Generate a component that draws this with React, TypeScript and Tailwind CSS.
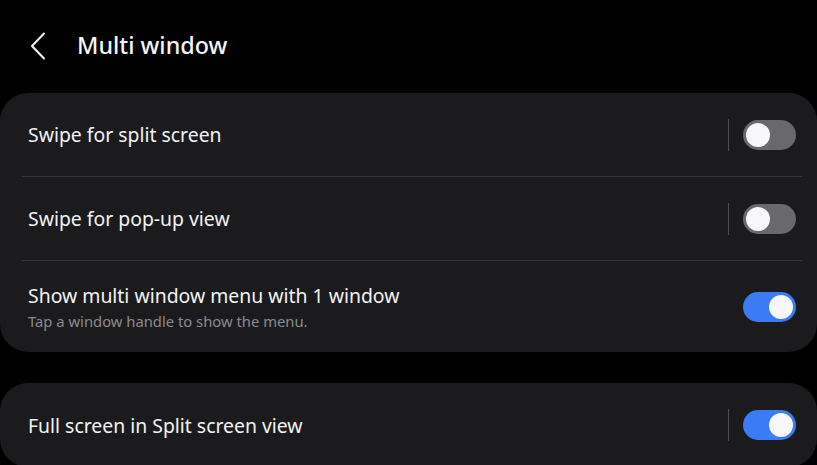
import React from 'react';

type Row = { title: string; sub?: string; on: boolean; divider: boolean };

const group1: Row[] = [
  { title: 'Swipe for split screen', on: false, divider: true },
  { title: 'Swipe for pop-up view', on: false, divider: true },
  { title: 'Show multi window menu with 1 window', sub: 'Tap a window handle to show the menu.', on: true, divider: false },
];

const group2: Row[] = [{ title: 'Full screen in Split screen view', on: true, divider: true }];

const Toggle: React.FC<{ on: boolean }> = ({ on }) => (
  <div
    className={`w-[53px] h-[30px] rounded-full flex items-center px-[3px] ${
      on ? 'bg-[#3b7cf5] justify-end' : 'bg-[#68686d] justify-start'
    }`}
  >
    <div className="w-[24px] h-[24px] rounded-full bg-[#f8f8fc]" />
  </div>
);

const SettingRow: React.FC<{ row: Row; last: boolean }> = ({ row, last }) => (
  <div className="pl-[22px] pr-[15px]">
    <div className={`flex items-center px-[6px] ${row.sub ? 'h-[91px]' : 'h-[84px]'} ${last ? '' : 'border-b border-[#38383a]'}`}>
      <div className="flex-1 mt-[1px]">
        <div className="text-[19.4px] text-[#f2f2f4] leading-[24px]">{row.title}</div>
        {row.sub && <div className="text-[14.8px] text-[#8b8b8f] leading-[20px] mt-[3px]">{row.sub}</div>}
      </div>
      {row.divider && <div className="w-px h-[32px] bg-[#4e4e52] mr-[14px]" />}
      <Toggle on={row.on} />
    </div>
  </div>
);

const App: React.FC = () => {
  return (
    <div className="w-[817px] h-[465px] bg-black overflow-hidden" style={{ fontFamily: '"Noto Sans", "Open Sans", sans-serif' }}>
      <div className="h-[93px] flex items-center pl-[30px]">
        <svg width="18" height="28" viewBox="0 0 18 28" fill="none" className="mr-[29px] -mt-[2px]">
          <path d="M14 1.5 L2 14 L14 26.5" stroke="#f2f2f4" strokeWidth="2" strokeLinecap="round" strokeLinejoin="round" />
        </svg>
        <h1 className="text-[23.3px] font-medium text-[#f5f5f7] -mt-[2px]">Multi window</h1>
      </div>
      <div className="bg-[#1b1b1d] rounded-[28px]">
        {group1.map((r, i) => (
          <SettingRow key={r.title} row={r} last={i === group1.length - 1} />
        ))}
      </div>
      <div className="h-[31px]" />
      <div className="bg-[#1b1b1d] rounded-[28px]">
        {group2.map((r) => (
          <SettingRow key={r.title} row={r} last />
        ))}
      </div>
    </div>
  );
};

export default App;
